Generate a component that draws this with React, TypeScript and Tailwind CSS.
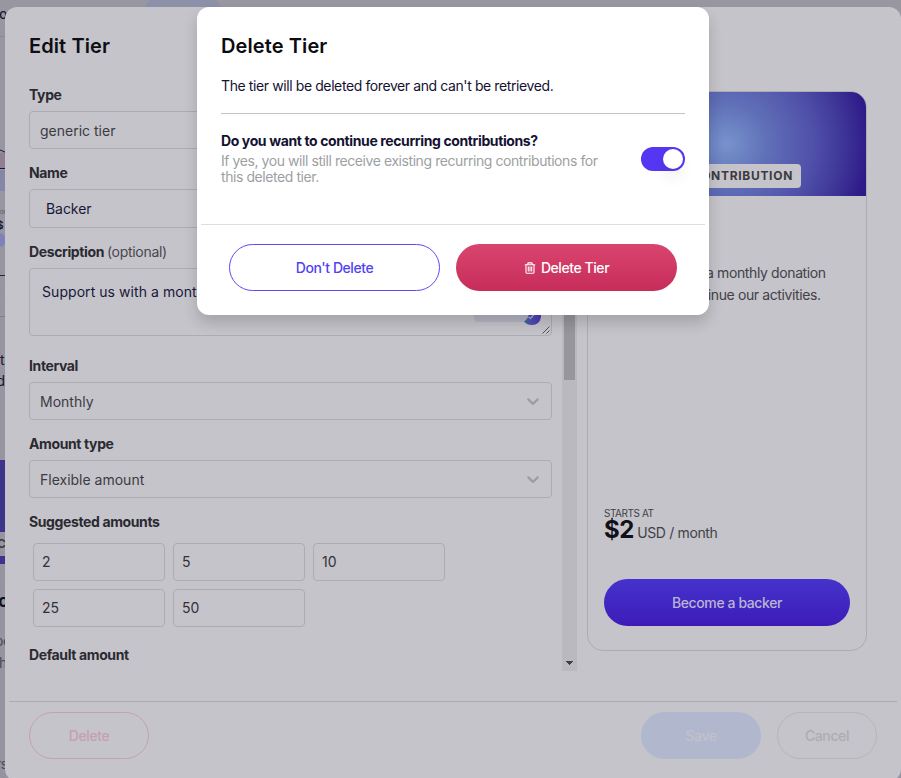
import React from "react";

function Label({ children, className = "" }: { children: React.ReactNode; className?: string }) {
  return (
    <div className={`h-[18px] text-sm leading-[18px] font-bold tracking-[-0.38px] text-[#2b2a31] ${className}`}>
      {children}
    </div>
  );
}

const box = "rounded-[4px] border border-[#adacb1] flex items-center";

function Select({ value }: { value: string }) {
  return (
    <div className={`${box} mt-[7px] h-[38px] justify-between pl-2.5 pr-2 text-sm text-[#3c3b42]`}>
      <span className="pt-0.5">{value}</span>
      <svg width="20" height="20" viewBox="0 0 20 20" fill="#9e9da3">
        <path d="M4.516 7.548c0.436-0.446 1.043-0.481 1.576 0l3.908 3.747 3.908-3.747c0.533-0.481 1.141-0.446 1.574 0 0.436 0.445 0.408 1.197 0 1.615-0.406 0.418-4.695 4.502-4.695 4.502-0.217 0.223-0.502 0.335-0.787 0.335s-0.57-0.112-0.789-0.335c0 0-4.287-4.084-4.695-4.502s-0.436-1.17 0-1.615z" />
      </svg>
    </div>
  );
}

/* Page behind the dialogs; only its outer edge shows. */
function PageEdge() {
  return (
    <div className="absolute inset-0 overflow-hidden bg-linear-to-b from-[#9897a1] to-[#9493a0]">
      <div className="absolute left-[144px] top-[-6px] h-10 w-[78px] rounded-full bg-[#8c90a9]" />
      <div className="absolute left-0 top-[36px] h-px w-[5px] bg-[#8587a4]" />
      <div className="absolute left-[-1px] top-[6px] text-sm leading-4 font-medium text-[#191830]">o</div>
      <svg className="absolute left-0 top-[145px]" width="5" height="50" viewBox="0 0 5 50">
        <path d="M0 8 L5 7 V23 H0Z" fill="#907f92" />
        <path d="M0 25 H5 V46 H0Z" fill="#8587a9" />
        <path d="M0 5 L5 7M0 23.5H5" stroke="#1b1a2c" fill="none" />
      </svg>
      <div className="absolute left-0 top-[209px] text-[6px] leading-[6px] text-[#55545f]">on</div>
      <div className="absolute left-[-3px] top-[218px] text-[10px] leading-[14px] font-bold text-[#1b1a2c]">$</div>
      <div className="absolute left-[-8px] top-[233px] size-[14px] rounded-full bg-[#7f82ba]" />
      <div className="absolute left-0 top-[275px] h-px w-[5px] bg-[#26253a]" />
      <div className="absolute left-0 top-[316px] h-px w-[5px] bg-[#83828c]" />
      <div className="absolute left-0 top-[351px] text-sm leading-[18px] text-[#191830]">t</div>
      <div className="absolute left-[-3.5px] top-[372px] text-sm leading-[18px] text-[#191830]">d</div>
      <div className="absolute left-0 top-[460px] h-[104px] w-[5px] bg-[#3a348a]" />
      <div className="absolute left-0 top-[532px] h-6 w-[5px] overflow-hidden bg-[#9796a0]">
        <span className="-ml-[3px] block text-xs leading-6 font-bold text-[#3c3b46]">C</span>
      </div>
      <div className="absolute left-[-2px] top-[590px] text-lg leading-[22px] font-bold text-[#12111f]">c</div>
      <div className="absolute left-[-5px] top-[632px] text-sm leading-[18px] tracking-[-0.4px] text-[#4a4955]">oc</div>
      <div className="absolute left-[-1px] top-[654px] text-sm leading-[18px] text-[#4a4955]">h</div>
      <div className="absolute left-[-4px] top-[755px] text-sm leading-[18px] tracking-[-0.4px] text-[#4a4955]">rs</div>
    </div>
  );
}

function TierForm() {
  return (
    <div className="flex h-[585px] w-[548px] justify-between">
      <div className="w-[523px] overflow-hidden">
        <Label>Type</Label>
        <div className={`${box} mt-[7px] h-[38px] pt-0.5 pl-2.5 text-sm text-[#3c3b42]`}>generic tier</div>
        <Label className="mt-[15px]">Name</Label>
        <div className={`${box} mt-[7px] h-[39px] pl-4 text-sm tracking-[-0.05px] text-[#19183a]`}>Backer</div>
        <Label className="mt-[15px]">
          Description <span className="font-normal tracking-[-0.3px] text-[#48474e]">(optional)</span>
        </Label>
        <div className="relative mt-[7px] h-[68px] overflow-hidden rounded-[4px] border border-[#adacb1] pt-3.5 pl-3 text-sm leading-[18px] tracking-[0.06px] text-[#19183a]">
          Support us with a monthly donation
          <div className="absolute top-8 left-[444px] h-[21px] w-14 rounded bg-[#b5b6c3]" />
          <svg className="absolute top-9 left-[492px]" width="20" height="20" viewBox="0 0 20 20">
            <defs>
              <linearGradient id="leaf" x1="0" x2="1">
                <stop offset="0" stopColor="#4865a8" />
                <stop offset="1" stopColor="#5132bd" />
              </linearGradient>
            </defs>
            <path d="M2 16.5Q6.500 14 6.500 9Q10 2 19 7.500V12Q17.500 20 10 20Q5 20 2 16.500Z" fill="url(#leaf)" />
            <path d="M6.500 12L8.500 13.500L12 9.500" stroke="#a9b5d0" strokeWidth="1.200" fill="none" />
          </svg>
          <svg className="absolute right-px bottom-px" width="8" height="8" viewBox="0 0 8 8" stroke="#47464d" strokeWidth="0.9">
            <path d="M0.5 7.500 L7.500 0.500 M4.500 7.500 L7.500 4.500" />
          </svg>
        </div>
        <Label className="mt-[21px]">Interval</Label>
        <Select value="Monthly" />
        <Label className="mt-[15px]">Amount type</Label>
        <Select value="Flexible amount" />
        <Label className="mt-[15px]">Suggested amounts</Label>
        <div className="mt-3 ml-1 grid grid-cols-[132px_132px_132px] gap-2">
          {["2", "5", "10", "25", "50"].map((v) => (
            <div key={v} className={`${box} h-[38px] pl-2 text-sm text-[#323138]`}>
              {v}
            </div>
          ))}
        </div>
        <Label className="mt-[19px]">Default amount</Label>
      </div>
      <div className="flex w-[15px] flex-col items-center justify-between bg-[#bab9bf] pb-1.5">
        <div className="h-[294px] w-[11px] bg-[#97969b]" />
        <svg width="7" height="4" viewBox="0 0 7 4" fill="#414046" shapeRendering="crispEdges">
          <path d="M0 0H7L3.5 4Z" />
        </svg>
      </div>
    </div>
  );
}

function TierCard() {
  return (
    <div className="mt-[5px] flex h-[560px] w-[280px] flex-col overflow-hidden rounded-2xl border border-[#adacb1]">
      <div className="flex h-[104px] items-end justify-end bg-[radial-gradient(circle_at_50%_50%,#7793cc_0px,#6070b8_40px,#5051a9_85px,#3f3798_115px,#2e1a88_142px)] pr-[65px] pb-2">
        <span className="h-6 rounded-[4px] bg-[#c5c4ca] px-2 text-xs leading-6 font-bold tracking-[0.7px] text-[#3b3a41]">
          CONTRIBUTION
        </span>
      </div>
      <div className="flex flex-1 flex-col px-4">
        <p className="mt-[66px] text-sm leading-[22px] tracking-[-0.38px] text-[#424148]">
          Support us with a monthly donation
          <br />
          and help us continue our activities.
        </p>
        <div className="mt-auto text-[10px] leading-3 tracking-[-0.45px] text-[#424148]">STARTS AT</div>
        <div className="flex h-[22px] items-baseline text-sm leading-[22px] tracking-[-0.35px] text-[#424148]">
          <span className="mr-[3px] text-2xl leading-[22px] font-bold text-[#111018]">$2</span>USD / month
        </div>
        <button className="mt-[38px] mb-6 h-[47px] shrink-0 rounded-full bg-linear-to-b from-[#4532cc] to-[#3d1bb8] text-sm font-medium tracking-[-0.4px] text-[#bbb4d4]">
          Become a backer
        </button>
      </div>
    </div>
  );
}

function EditTierPanel() {
  return (
    <section className="absolute top-[7px] left-[5px] flex h-[774px] w-[896px] flex-col rounded-xl bg-[#c5c4ca]">
      <h1 className="h-[79px] pt-[26px] pl-6 text-xl leading-[26px] font-semibold tracking-[0.1px] text-[#0f0e13]">Edit Tier</h1>
      <div className="flex gap-2.5 pl-6">
        <TierForm />
        <TierCard />
      </div>
      <div className="mx-1 mt-[30px] flex justify-between border-t border-[#adacb1] px-5 pt-2.5 text-sm font-medium tracking-[-0.4px]">
        <button className="h-[47px] w-[120px] rounded-full border border-[#c6a0b2] text-[#c4a0b1]">Delete</button>
        <div className="flex gap-4">
          <button className="h-[47px] w-[120px] rounded-full bg-[#b1b8cd] text-[#c0c2ca]">Save</button>
          <button className="h-[47px] w-[100px] rounded-full border border-[#b5b4ba] text-[#adacb2]">Cancel</button>
        </div>
      </div>
    </section>
  );
}

function DeleteDialog() {
  return (
    <section className="absolute top-[7px] left-[197px] flex h-[308px] w-[512px] flex-col rounded-xl bg-white shadow-[0_8px_14px_rgba(20,20,20,0.18)]">
      <h2 className="px-6 pt-[26px] text-xl leading-[26px] font-semibold tracking-[0.1px] text-[#0c0b10]">Delete Tier</h2>
      <p className="px-6 pt-[18px] text-sm leading-[18px] tracking-[-0.4px] text-[#141232]">
        The tier will be deleted forever and can't be retrieved.
      </p>
      <div className="mx-6 mt-[18px] flex items-start justify-between border-t border-[#c4c4c6] pt-[19px]">
        <div className="w-[390px]">
          <div className="text-sm leading-4 font-bold tracking-[-0.38px] text-[#141232]">
            Do you want to continue recurring contributions?
          </div>
          <div className="mt-1 text-sm leading-4 tracking-[-0.43px] text-[#9d9fa3]">
            If yes, you will still receive existing recurring contributions for
            <br />
            this deleted tier.
          </div>
        </div>
        <div className="mt-3.5 flex h-6 w-11 items-center justify-end rounded-full bg-[#5536f2] pr-0.5">
          <div className="size-5 rounded-full bg-white shadow-[0_10px_14px_rgba(20,20,20,0.06)]" />
        </div>
      </div>
      <div className="mx-1 mt-[39px] flex gap-4 border-t border-[#dcdee0] px-7 pt-[19px] text-sm font-medium tracking-[-0.43px]">
        <button className="h-[47px] w-[211px] rounded-full border border-[#5b4bf5] text-[#4f43f2]">Don't Delete</button>
        <button className="flex h-[47px] w-[221px] items-center justify-center gap-[5px] rounded-full bg-linear-to-b from-[#d9456f] to-[#c62c58] text-white">
          <svg width="12" height="12" viewBox="0 0 12 12" fill="none" stroke="white" strokeWidth="1.1">
            <path d="M0.8 2.7H11.2M3.3 2.7 4.2 0.9H7.8L8.7 2.7M2 2.7V10.2Q2 11.3 3.1 11.3H8.9Q10 11.3 10 10.2V2.7M4.3 4.5V9.5M6 4.5V9.5M7.7 4.5V9.5" />
          </svg>
          Delete Tier
        </button>
      </div>
    </section>
  );
}

export default function App() {
  return (
    <main className="relative h-[778px] w-[901px] overflow-hidden font-['Inter',sans-serif]">
      <PageEdge />
      <EditTierPanel />
      <DeleteDialog />
    </main>
  );
}
